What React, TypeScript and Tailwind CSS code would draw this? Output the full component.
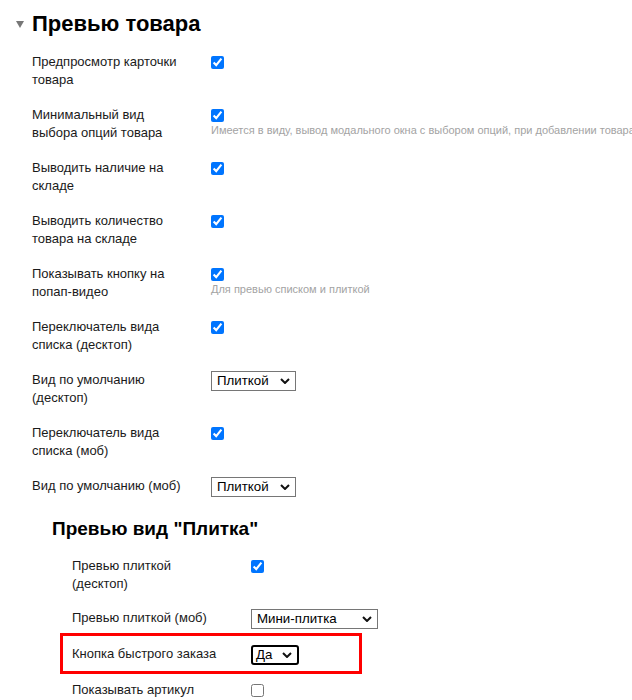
import React from 'react'

type Row = {
  label: string
  kind: 'check' | 'select'
  checked?: boolean
  value?: string
  hint?: string
  selectClass?: string
  marked?: boolean
}

const mainRows: Row[] = [
  { label: 'Предпросмотр карточки товара', kind: 'check', checked: true },
  {
    label: 'Минимальный вид выбора опций товара',
    kind: 'check',
    checked: true,
    hint: 'Имеется в виду, вывод модального окна с выбором опций, при добавлении товара',
  },
  { label: 'Выводить наличие на складе', kind: 'check', checked: true },
  { label: 'Выводить количество товара на складе', kind: 'check', checked: true },
  { label: 'Показывать кнопку на попап-видео', kind: 'check', checked: true, hint: 'Для превью списком и плиткой' },
  { label: 'Переключатель вида списка (десктоп)', kind: 'check', checked: true },
  { label: 'Вид по умолчанию (десктоп)', kind: 'select', value: 'Плиткой', selectClass: 'w-[85px]' },
  { label: 'Переключатель вида списка (моб)', kind: 'check', checked: true },
  { label: 'Вид по умолчанию (моб)', kind: 'select', value: 'Плиткой', selectClass: 'w-[85px]' },
]

const tileRows: Row[] = [
  { label: 'Превью плиткой (десктоп)', kind: 'check', checked: true },
  { label: 'Превью плиткой (моб)', kind: 'select', value: 'Мини-плитка', selectClass: 'w-[127px]' },
  { label: 'Кнопка быстрого заказа', kind: 'select', value: 'Да', selectClass: 'w-[48px] focus', marked: true },
  { label: 'Показывать артикул', kind: 'check', checked: false },
]

function Chevron() {
  return (
    <svg width="10" height="6" viewBox="0 0 10 6" className="shrink-0">
      <polyline points="1,1 5,5 9,1" fill="none" stroke="#111" strokeWidth="2" />
    </svg>
  )
}

function FakeSelect({ value, className }: { value: string; className?: string }) {
  const focused = className?.includes('focus')
  return (
    <div
      className={[
        'flex h-[20px] items-center justify-between bg-white pr-[5px] text-[13.3px] leading-none text-black',
        focused
          ? 'h-[19px] rounded-[3px] border-2 border-black pl-[3px]'
          : 'border border-[#767676] pl-[5px]',
        className?.replace('focus', '') ?? '',
      ].join(' ')}>
      <span>{value}</span>
      <Chevron />
    </div>
  )
}

function SettingRow({ row }: { row: Row }) {
  return (
    <div className="relative flex items-start">
      {row.marked && (
        <div className="pointer-events-none absolute -left-[12px] -top-[12px] h-[41px] w-[302px] border-[3px] border-[#ff0000]" />
      )}
      <div className="w-[179px] shrink-0 pr-[23px] leading-[18px]">{row.label}</div>
      <div className="flex flex-col items-start">
        {row.kind === 'check' ? (
          <input type="checkbox" defaultChecked={row.checked} className="mt-[3px] h-[13px] w-[13px]" />
        ) : (
          <FakeSelect value={row.value ?? ''} className={row.selectClass} />
        )}
        {row.hint && (
          <div className="mt-[2px] whitespace-nowrap text-[11px] leading-[13px] text-[#a3a3a3]">{row.hint}</div>
        )}
      </div>
    </div>
  )
}

export default function App() {
  return (
    <div className="relative h-[700px] w-[632px] overflow-hidden bg-white font-['Liberation_Sans',Arial,sans-serif] text-[13px] text-[#1a1a1a]">

      {/* заголовок секции */}
      <div className="flex items-center pl-[16px] pt-[11px]">
        <svg width="8" height="7" viewBox="0 0 8 7" className="mr-[8px] mt-[1px]">
          <polygon points="0,0 8,0 4,7" fill="#777" />
        </svg>
        <h2 className="text-[22px] font-bold leading-[25px] text-black">Превью товара</h2>
      </div>

      <div className="mt-[17px] flex flex-col gap-[17px] pl-[32px]">
        {mainRows.map(r => <SettingRow key={r.label} row={r} />)}
      </div>

      {/* Плитка */}
      <div className="mt-[21px] pl-[52px]">
        <h3 className="text-[19px] font-bold leading-[22px] text-black">Превью вид "Плитка"</h3>
        <div className="mt-[17px] flex flex-col gap-[16px] pl-[20px]">
          {tileRows.map(r => <SettingRow key={r.label} row={r} />)}
        </div>
      </div>
    </div>
  )
}
